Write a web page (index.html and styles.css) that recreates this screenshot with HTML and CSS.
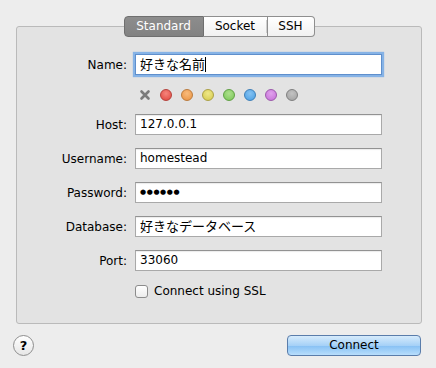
FILE: index.html
```html
<!DOCTYPE html>
<html lang="ja">
<head>
    <meta charset="UTF-8">
    <title>Connection</title>
    <link rel="stylesheet" href="styles.css">
</head>
<body>
    <div class="window">
        <div class="tabs">
            <div class="tab tab-standard selected">Standard</div>
            <div class="tab tab-socket">Socket</div>
            <div class="tab tab-ssh">SSH</div>
        </div>

        <div class="group">
            <div class="form">
                <label class="label">Name:</label>
                <div class="field focused"><span class="ja">好きな名前</span><span class="caret"></span></div>

                <div class="colors">
                    <svg class="clear" width="12" height="12" viewBox="0 0 12 12">
                        <path d="M2.5 2.5 L9.5 9.5 M9.5 2.5 L2.5 9.5" stroke="#7b7b7b" stroke-width="2.6" stroke-linecap="round"/>
                    </svg>
                    <span class="dot red"></span>
                    <span class="dot orange"></span>
                    <span class="dot yellow"></span>
                    <span class="dot green"></span>
                    <span class="dot blue"></span>
                    <span class="dot purple"></span>
                    <span class="dot gray"></span>
                </div>

                <label class="label">Host:</label>
                <div class="field">127.0.0.1</div>

                <label class="label">Username:</label>
                <div class="field">homestead</div>

                <label class="label">Password:</label>
                <div class="field password">●●●●●●</div>

                <label class="label">Database:</label>
                <div class="field"><span class="ja">好きなデータベース</span></div>

                <label class="label">Port:</label>
                <div class="field">33060</div>

                <div class="check-row">
                    <span class="checkbox"></span>
                    <span>Connect using SSL</span>
                </div>
            </div>
        </div>

        <div class="footer">
            <button class="help">?</button>
            <button class="connect">Connect</button>
        </div>
    </div>
</body>
</html>
```

FILE: styles.css
```css
body {
    margin: 0;
    background: #ededed;
    font-family: "DejaVu Sans", "Noto Sans CJK JP", sans-serif;
    font-size: 12px;
    color: #000;
}

.window {
    padding: 16px 14px 0 16px;
}

.tabs {
    display: flex;
    justify-content: center;
    margin-bottom: -11px;
    position: relative;
    z-index: 1;
}

.tab {
    height: 21px;
    box-sizing: border-box;
    border: 1px solid #8f8f8f;
    border-left: none;
    background: linear-gradient(#ffffff, #f1f1f1);
    line-height: 19px;
    text-align: center;
    position: relative;
}

.tab-standard {
    width: 80px;
    border-left: 1px solid #7c7c7c;
    border-radius: 4px 0 0 4px;
}

.tab-socket {
    width: 64px;
}

.tab-socket::after {
    content: "";
    position: absolute;
    right: 0;
    top: 3px;
    bottom: 3px;
    width: 1px;
    background: #cfcfcf;
}

.tab-ssh {
    width: 47px;
    border-radius: 0 4px 4px 0;
}

.tab.selected {
    background: linear-gradient(#8d8d8d, #828282);
    border-color: #6f6f6f;
    color: #fff;
}

.group {
    border: 1px solid #bababa;
    border-radius: 3px;
    background: #e3e3e3;
    padding: 27px 0 25px 0;
}

.form {
    display: grid;
    grid-template-columns: 110px 247px;
    column-gap: 8px;
    row-gap: 13px;
    align-items: center;
}

.label {
    text-align: right;
}

.field {
    height: 21px;
    box-sizing: border-box;
    background: #fff;
    border: 1px solid #a9a9a9;
    border-top-color: #929292;
    box-shadow: inset 0 1px 1px rgba(0, 0, 0, 0.08);
    padding: 0 4px;
    line-height: 19px;
    white-space: nowrap;
}

.ja {
    font-size: 13px;
}

.field.focused {
    border-color: #5f8fcc;
    box-shadow: 0 0 1px 2px #86b3e6;
}

.caret {
    display: inline-block;
    width: 1px;
    height: 15px;
    background: #000;
    vertical-align: -3px;
}

.password {
    font-size: 7px;
    letter-spacing: 0.6px;
}

.colors {
    grid-column: 2;
    display: flex;
    gap: 9px;
    padding-left: 4px;
    height: 12px;
    margin-top: 1px;
}

.dot {
    width: 12px;
    height: 12px;
    box-sizing: border-box;
    border-radius: 50%;
    border: 1px solid;
}

.red { background: radial-gradient(circle at 50% 35%, #f5857c, #e0443d); border-color: #b5403a; }
.orange { background: radial-gradient(circle at 50% 35%, #f8bb7c, #ea9240); border-color: #bb7b3c; }
.yellow { background: radial-gradient(circle at 50% 35%, #efe888, #d4c94a); border-color: #aba044; }
.green { background: radial-gradient(circle at 50% 35%, #addf8c, #79c756); border-color: #60a043; }
.blue { background: radial-gradient(circle at 50% 35%, #85c2f2, #4a9fe3); border-color: #3d7fb8; }
.purple { background: radial-gradient(circle at 50% 35%, #e0a2ec, #c56ed8); border-color: #9c58ab; }
.gray { background: radial-gradient(circle at 50% 35%, #c3c3c3, #a0a0a0); border-color: #7f7f7f; }

.check-row {
    grid-column: 2;
    display: flex;
    align-items: center;
    gap: 6px;
}

.checkbox {
    width: 13px;
    height: 13px;
    box-sizing: border-box;
    border: 1px solid #8c8c8c;
    border-radius: 3px;
    background: linear-gradient(#ffffff, #ececec);
}

.footer {
    display: flex;
    justify-content: space-between;
    align-items: center;
    margin: 0 1px 0 -3px;
    padding-top: 11px;
}

button {
    font-family: "DejaVu Sans", "Noto Sans CJK JP", sans-serif;
    font-size: 12px;
    color: #000;
    padding: 0;
    cursor: pointer;
}

.help {
    width: 21px;
    height: 21px;
    border-radius: 50%;
    border: 1px solid #8e8e8e;
    background: linear-gradient(#ffffff, #e6e6e6);
    font-weight: bold;
    font-size: 13px;
    line-height: 19px;
}

.connect {
    width: 134px;
    height: 21px;
    border: 1px solid #5a7dab;
    border-radius: 4px;
    background: linear-gradient(#d6ebfc, #a6d1f7 50%, #86c0f4 51%, #b8defc);
    line-height: 19px;
}
```
